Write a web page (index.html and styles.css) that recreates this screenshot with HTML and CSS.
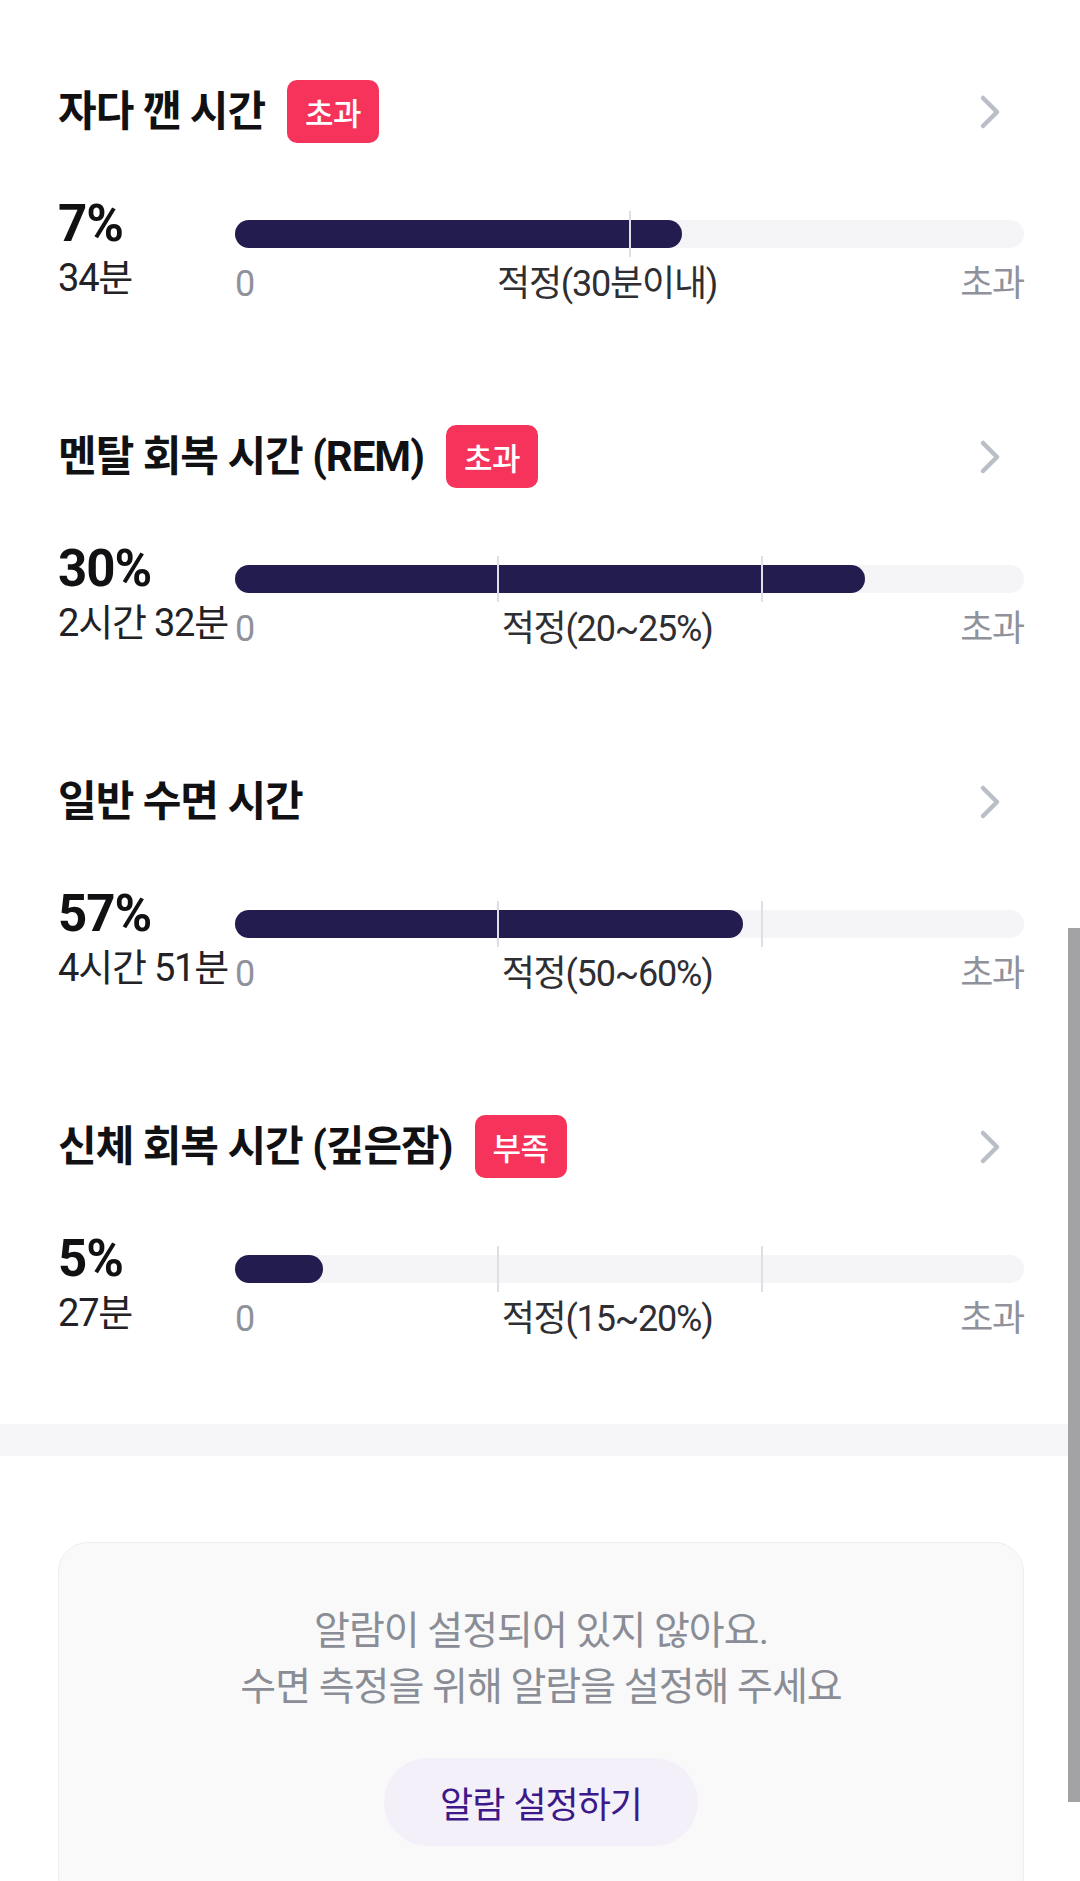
FILE: index.html
```html
<!DOCTYPE html>
<html lang="ko">
<head>
<meta charset="utf-8">
<title>수면 단계</title>
<link rel="stylesheet" href="styles.css">
</head>
<body>
<main class="page">
  <div class="metrics">
    <section class="metric">
      <div class="metric-head">
        <h2 class="metric-title">자다 깬 시간</h2>
        <span class="badge">초과</span>
        <svg class="chev" viewBox="0 0 24 36" aria-hidden="true"><polyline points="5,4 19,18 5,32"/></svg>
      </div>
      <div class="metric-body">
        <div class="values"><div class="pct">7%</div><div class="dur">34분</div></div>
        <div class="gauge">
          <div class="track">
            <div class="fill" style="width:56.7%"></div>
            <span class="tick" style="left:50%"></span>
          </div>
          <div class="scale"><span class="s-end">0</span><span class="s-mid">적정(30분이내)</span><span class="s-end">초과</span></div>
        </div>
      </div>
    </section>

    <section class="metric">
      <div class="metric-head">
        <h2 class="metric-title">멘탈 회복 시간 (REM)</h2>
        <span class="badge">초과</span>
        <svg class="chev" viewBox="0 0 24 36" aria-hidden="true"><polyline points="5,4 19,18 5,32"/></svg>
      </div>
      <div class="metric-body">
        <div class="values"><div class="pct">30%</div><div class="dur">2시간 32분</div></div>
        <div class="gauge">
          <div class="track">
            <div class="fill" style="width:79.9%"></div>
            <span class="tick" style="left:33.3%"></span>
            <span class="tick" style="left:66.8%"></span>
          </div>
          <div class="scale"><span class="s-end">0</span><span class="s-mid">적정(20~25%)</span><span class="s-end">초과</span></div>
        </div>
      </div>
    </section>

    <section class="metric">
      <div class="metric-head">
        <h2 class="metric-title">일반 수면 시간</h2>
        <svg class="chev" viewBox="0 0 24 36" aria-hidden="true"><polyline points="5,4 19,18 5,32"/></svg>
      </div>
      <div class="metric-body">
        <div class="values"><div class="pct">57%</div><div class="dur">4시간 51분</div></div>
        <div class="gauge">
          <div class="track">
            <div class="fill" style="width:64.4%"></div>
            <span class="tick" style="left:33.3%"></span>
            <span class="tick" style="left:66.8%"></span>
          </div>
          <div class="scale"><span class="s-end">0</span><span class="s-mid">적정(50~60%)</span><span class="s-end">초과</span></div>
        </div>
      </div>
    </section>

    <section class="metric">
      <div class="metric-head">
        <h2 class="metric-title">신체 회복 시간 (깊은잠)</h2>
        <span class="badge">부족</span>
        <svg class="chev" viewBox="0 0 24 36" aria-hidden="true"><polyline points="5,4 19,18 5,32"/></svg>
      </div>
      <div class="metric-body">
        <div class="values"><div class="pct">5%</div><div class="dur">27분</div></div>
        <div class="gauge">
          <div class="track">
            <div class="fill" style="width:11.1%"></div>
            <span class="tick" style="left:33.3%"></span>
            <span class="tick" style="left:66.8%"></span>
          </div>
          <div class="scale"><span class="s-end">0</span><span class="s-mid">적정(15~20%)</span><span class="s-end">초과</span></div>
        </div>
      </div>
    </section>
  </div>

  <div class="divider"></div>

  <div class="alarm-wrap">
    <div class="alarm-card">
      <p class="alarm-text">알람이 설정되어 있지 않아요.<br>수면 측정을 위해 알람을 설정해 주세요</p>
      <button class="alarm-btn" type="button">알람 설정하기</button>
    </div>
  </div>

  <div class="scroll-thumb" aria-hidden="true"></div>
</main>
</body>
</html>
```

FILE: styles.css
```css
* {
  box-sizing: border-box;
}

html, body {
  margin: 0;
  padding: 0;
  background: #ffffff;
}

body {
  font-family: Roboto, "Noto Sans CJK KR", sans-serif;
  color: #1c1c1e;
  overflow: hidden;
}

.page {
  position: relative;
  width: 1080px;
  min-height: 1881px;
}

.metrics {
  display: flex;
  flex-direction: column;
  gap: 119px;
  padding: 80px 56px 83px 58px;
}

.metric-head {
  display: flex;
  align-items: center;
  height: 63px;
}

.metric-title {
  margin: 0;
  font-size: 42px;
  font-weight: 700;
  letter-spacing: -1px;
  color: #111114;
  line-height: 1;
}

.badge {
  margin-left: 22px;
  height: 63px;
  padding: 0 18px;
  display: inline-flex;
  align-items: center;
  justify-content: center;
  background: #f5335b;
  color: #ffffff;
  border-radius: 10px;
  font-size: 31px;
  font-weight: 500;
  letter-spacing: -0.5px;
}

.chev {
  margin-left: auto;
  margin-right: 22px;
  width: 24px;
  height: 36px;
  fill: none;
  stroke: #babec7;
  stroke-width: 4.5;
  stroke-linecap: round;
  stroke-linejoin: round;
}

.metric-body {
  margin-top: 55px;
  display: grid;
  grid-template-columns: 177px 1fr;
}

.values {
  display: flex;
  flex-direction: column;
  white-space: nowrap;
}

.pct {
  height: 52px;
  line-height: 52px;
  font-size: 51px;
  font-weight: 700;
  letter-spacing: -1px;
  color: #111114;
}

.dur {
  height: 56px;
  line-height: 56px;
  font-size: 38px;
  font-weight: 400;
  letter-spacing: -1.2px;
  color: #222226;
}

.gauge {
  display: flex;
  flex-direction: column;
}

.track {
  position: relative;
  margin-top: 22px;
  height: 28px;
  border-radius: 14px;
  background: #f5f5f7;
}

.fill {
  height: 100%;
  border-radius: 14px;
  background: #231c4f;
}

.tick {
  position: absolute;
  top: -9px;
  bottom: -9px;
  width: 2px;
  margin-left: -1px;
  background: #dedee4;
}

.scale {
  margin-top: 14px;
  height: 44px;
  display: flex;
  justify-content: space-between;
  align-items: center;
  font-size: 36px;
  letter-spacing: -1.2px;
  line-height: 44px;
}

.s-end {
  color: #8f929a;
}

.s-mid {
  color: #2f2f33;
}

.divider {
  height: 32px;
  background: #f6f6f8;
}

.alarm-wrap {
  padding: 86px 56px 0 58px;
}

.alarm-card {
  display: flex;
  flex-direction: column;
  align-items: center;
  padding: 60px 0 60px;
  background: #f9f9fa;
  border: 1px solid #eeeef1;
  border-radius: 30px;
}

.alarm-text {
  margin: 0;
  text-align: center;
  font-size: 39px;
  line-height: 56px;
  letter-spacing: -1px;
  color: #8a8d95;
}

.alarm-btn {
  margin-top: 43px;
  width: 314px;
  height: 88px;
  border: none;
  border-radius: 44px;
  background: #f3f0fa;
  color: #3c1888;
  font-family: "Noto Sans CJK KR", sans-serif;
  font-size: 36px;
  letter-spacing: -1px;
}

.scroll-thumb {
  position: absolute;
  top: 928px;
  right: 0;
  width: 12px;
  height: 874px;
  background: #a3a3a6;
}
```
